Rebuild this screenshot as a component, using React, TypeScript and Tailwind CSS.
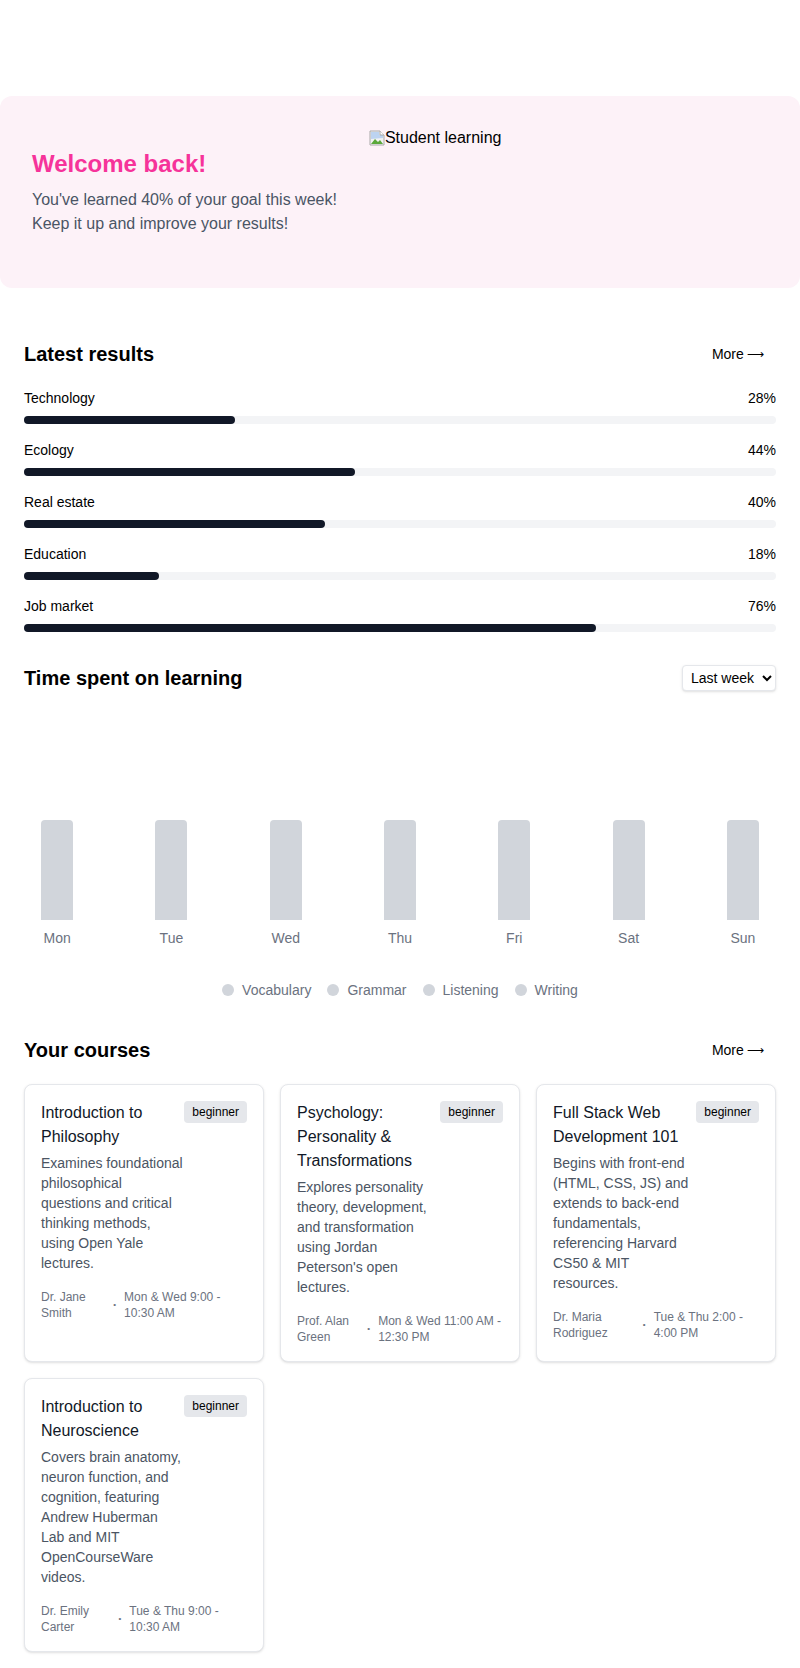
const results = [
	{ label: "Technology", value: 28 },
	{ label: "Ecology", value: 44 },
	{ label: "Real estate", value: 40 },
	{ label: "Education", value: 18 },
	{ label: "Job market", value: 76 },
];

const days = ["Mon", "Tue", "Wed", "Thu", "Fri", "Sat", "Sun"];

const legend = ["Vocabulary", "Grammar", "Listening", "Writing"];

const courses = [
	{
		title: "Introduction to Philosophy",
		description:
			"Examines foundational philosophical questions and critical thinking methods, using Open Yale lectures.",
		teacher: "Dr. Jane Smith",
		schedule: "Mon & Wed 9:00 - 10:30 AM",
	},
	{
		title: "Psychology: Personality & Transformations",
		description:
			"Explores personality theory, development, and transformation using Jordan Peterson's open lectures.",
		teacher: "Prof. Alan Green",
		schedule: "Mon & Wed 11:00 AM - 12:30 PM",
	},
	{
		title: "Full Stack Web Development 101",
		description:
			"Begins with front-end (HTML, CSS, JS) and extends to back-end fundamentals, referencing Harvard CS50 & MIT resources.",
		teacher: "Dr. Maria Rodriguez",
		schedule: "Tue & Thu 2:00 - 4:00 PM",
	},
	{
		title: "Introduction to Neuroscience",
		description:
			"Covers brain anatomy, neuron function, and cognition, featuring Andrew Huberman Lab and MIT OpenCourseWare videos.",
		teacher: "Dr. Emily Carter",
		schedule: "Tue & Thu 9:00 - 10:30 AM",
	},
];

function BrokenImage() {
	return (
		<svg width="16" height="16" viewBox="0 0 16 16" className="shrink-0">
			<path d="M1 1h10l4 4v10H1z" fill="#f2f2f2" stroke="#a8a8a8" />
			<path d="M2 14l4-5 3 3 2-2 3 4z" fill="#5aa83a" />
			<path d="M2 9V2h8v3h4v3z" fill="#bcd3f0" />
			<path d="M11 1v4h4" fill="#fff" stroke="#a8a8a8" />
		</svg>
	);
}

function MoreButton() {
	return (
		<button className="px-3 py-2 text-sm leading-5 text-black flex items-center gap-[3px]">
			More
			<span className="font-['DejaVu_Sans',sans-serif] text-[12px]">⟶</span>
		</button>
	);
}

export default function App() {
	return (
		<div className="bg-white font-['Liberation_Sans',Arial,sans-serif] text-black pt-24 pb-4">
			<div className="bg-pink-50 rounded-xl p-8 flex flex-row items-center gap-8 h-48">
				<div>
					<h1 className="text-2xl font-bold text-pink-500">Welcome back!</h1>
					<p className="mt-2 text-base leading-6 text-gray-600">
						You've learned 40% of your goal this week!
						<br />
						Keep it up and improve your results!
					</p>
				</div>
				<div className="h-32 self-start flex items-start">
					<span className="flex items-center text-base leading-5">
						<BrokenImage />
						Student learning
					</span>
				</div>
			</div>

			<div className="px-6">
				<div className="mt-12 flex items-center justify-between mb-4">
					<h2 className="text-xl font-bold">Latest results</h2>
					<MoreButton />
				</div>
				<div className="flex flex-col gap-4">
					{results.map((r) => (
						<div key={r.label}>
							<div className="flex justify-between text-sm leading-5">
								<span>{r.label}</span>
								<span>{r.value}%</span>
							</div>
							<div className="mt-2 h-2 rounded-full bg-[#f3f4f6]">
								<div
									className="h-2 rounded-full bg-[#111827]"
									style={{ width: `${r.value}%` }}
								></div>
							</div>
						</div>
					))}
				</div>

				<div className="mt-8 flex items-center justify-between">
					<h2 className="text-xl font-bold">Time spent on learning</h2>
					<select className="h-[26px] px-1 text-sm border border-gray-200 rounded bg-white shadow-sm">
						<option>Last week</option>
					</select>
				</div>

				<div className="-mx-6 mt-4 h-[212px] grid grid-cols-7 items-end">
					{days.map((d) => (
						<div key={d} className="flex justify-center">
							<div className="w-8 h-[100px] bg-[#d1d5db] rounded-t-sm"></div>
						</div>
					))}
				</div>
				<div className="-mx-6 mt-2 grid grid-cols-7">
					{days.map((d) => (
						<div key={d} className="text-center text-sm leading-5 text-[#6b7280]">
							{d}
						</div>
					))}
				</div>
				<div className="mt-8 flex justify-center gap-4">
					{legend.map((l) => (
						<div key={l} className="flex items-center gap-2 text-sm leading-5 text-[#6b7280]">
							<span className="w-3 h-3 rounded-full bg-[#d1d5db]"></span>
							{l}
						</div>
					))}
				</div>

				<div className="mt-8 flex items-center justify-between mb-4">
					<h2 className="text-xl font-bold">Your courses</h2>
					<MoreButton />
				</div>
				<div className="grid grid-cols-3 gap-4">
					{courses.map((c) => (
						<div
							key={c.title}
							className="border border-[#e5e7eb] rounded-lg p-4 shadow-sm bg-white"
						>
							<div className="flex justify-between items-start">
								<div>
									<h3 className="text-base leading-6 text-[#111827]">{c.title}</h3>
									<p className="mt-1 text-sm leading-5 text-[#4b5563]">
										{c.description}
									</p>
								</div>
								<span className="shrink-0 bg-[#e5e7eb] rounded px-2 py-1 text-xs leading-[14px] text-black">
									beginner
								</span>
							</div>
							<div className="mt-4 flex items-center gap-2 text-xs leading-4 text-[#6b7280]">
								<span>{c.teacher}</span>
								<span className="text-[8px]">•</span>
								<span>{c.schedule}</span>
							</div>
						</div>
					))}
				</div>
			</div>
		</div>
	);
}
